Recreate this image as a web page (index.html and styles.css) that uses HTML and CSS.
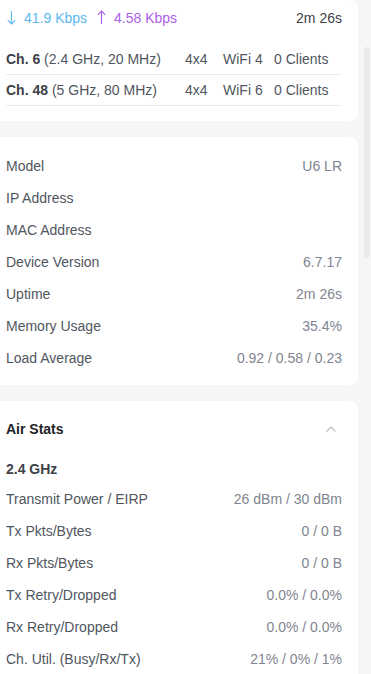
FILE: index.html
```html
<!DOCTYPE html>
<html>
<head>
<meta charset="utf-8">
<link rel="stylesheet" href="styles.css">
</head>
<body>
<div class="page">
  <main class="content">
    <section class="card card-top">
      <div class="speed-row">
        <div class="speeds">
          <span class="speed down">
            <svg class="arrow" width="9" height="15" viewBox="0 0 9 15"><path d="M4.5 1 V14 M0.8 10.2 L4.5 14 L8.2 10.2" fill="none" stroke="#5bb8f0" stroke-width="1.1"/></svg>
            41.9 Kbps
          </span>
          <span class="speed up">
            <svg class="arrow" width="9" height="15" viewBox="0 0 9 15"><path d="M4.5 14 V1 M0.8 4.8 L4.5 1 L8.2 4.8" fill="none" stroke="#ab5fe6" stroke-width="1.1"/></svg>
            4.58 Kbps
          </span>
        </div>
        <span class="uptime">2m 26s</span>
      </div>
      <div class="channels">
        <div class="chan-row">
          <span class="chan-name"><b>Ch. 6</b> (2.4 GHz, 20 MHz)</span>
          <span>4x4</span>
          <span>WiFi 4</span>
          <span>0 Clients</span>
        </div>
        <div class="chan-row">
          <span class="chan-name"><b>Ch. 48</b> (5 GHz, 80 MHz)</span>
          <span>4x4</span>
          <span>WiFi 6</span>
          <span>0 Clients</span>
        </div>
      </div>
    </section>

    <section class="card card-info">
      <div class="row"><span class="label">Model</span><span class="value">U6 LR</span></div>
      <div class="row"><span class="label">IP Address</span><span class="value"></span></div>
      <div class="row"><span class="label">MAC Address</span><span class="value"></span></div>
      <div class="row"><span class="label">Device Version</span><span class="value">6.7.17</span></div>
      <div class="row"><span class="label">Uptime</span><span class="value">2m 26s</span></div>
      <div class="row"><span class="label">Memory Usage</span><span class="value">35.4%</span></div>
      <div class="row"><span class="label">Load Average</span><span class="value">0.92 / 0.58 / 0.23</span></div>
    </section>

    <section class="card card-air">
      <div class="air-head">
        <h2>Air Stats</h2>
        <svg class="chevron" width="12" height="8" viewBox="0 0 12 8"><path d="M1.5 6.5 L6 2 L10.5 6.5" fill="none" stroke="#b4b8be" stroke-width="1.1"/></svg>
      </div>
      <div class="band">2.4 GHz</div>
      <div class="row"><span class="label">Transmit Power / EIRP</span><span class="value">26 dBm / 30 dBm</span></div>
      <div class="row"><span class="label">Tx Pkts/Bytes</span><span class="value">0 / 0 B</span></div>
      <div class="row"><span class="label">Rx Pkts/Bytes</span><span class="value">0 / 0 B</span></div>
      <div class="row"><span class="label">Tx Retry/Dropped</span><span class="value">0.0% / 0.0%</span></div>
      <div class="row"><span class="label">Rx Retry/Dropped</span><span class="value">0.0% / 0.0%</span></div>
      <div class="row"><span class="label">Ch. Util. (Busy/Rx/Tx)</span><span class="value">21% / 0% / 1%</span></div>
    </section>
  </main>
  <div class="scroll-track"><div class="scroll-thumb"></div></div>
</div>
</body>
</html>
```

FILE: styles.css
```css
html, body {
  margin: 0;
  padding: 0;
  height: 674px;
  overflow: hidden;
  background: #f5f6f7;
}

body {
  font-family: "Liberation Sans", Arial, sans-serif;
  font-size: 14px;
  color: #50565e;
}

.page {
  display: flex;
  height: 674px;
}

.content {
  width: 358px;
  display: flex;
  flex-direction: column;
  gap: 16px;
}

.card {
  background: #ffffff;
  border-radius: 0 8px 8px 0;
  padding: 0 16px 0 6px;
}

.card-top {
  padding-bottom: 15px;
}

.speed-row {
  height: 35px;
  display: flex;
  align-items: center;
  justify-content: space-between;
}

.speeds {
  display: flex;
  gap: 9px;
}

.speed {
  display: flex;
  align-items: center;
  gap: 8px;
}

.arrow {
  display: block;
  margin-left: 1px;
}

.down { color: #5bb8f0; }
.up { color: #ab5fe6; }
.uptime { color: #3d4148; }

.channels {
  margin-top: 9px;
}

.chan-row {
  height: 30px;
  display: grid;
  grid-template-columns: 179px 38px 51px auto;
  align-items: center;
  border-bottom: 1px solid #ebecee;
  color: #50565e;
}

.chan-row b {
  color: #3d4148;
  font-weight: bold;
}

.card-info {
  padding-top: 13px;
  padding-bottom: 11px;
}

.row {
  height: 32px;
  display: flex;
  align-items: center;
  justify-content: space-between;
}

.label { color: #50565e; }
.value { color: #7f8590; }

.card-air {
  padding-top: 18px;
  flex: 1;
  border-bottom-right-radius: 0;
}

.air-head {
  height: 20px;
  display: flex;
  align-items: center;
  justify-content: space-between;
  padding-right: 5px;
}

.air-head h2 {
  margin: 0;
  font-size: 14px;
  font-weight: bold;
  color: #212327;
}

.chevron {
  display: block;
}

.band {
  margin-top: 16px;
  height: 28px;
  display: flex;
  align-items: center;
  font-weight: bold;
  color: #3d4148;
}

.scroll-track {
  flex: 1;
  display: flex;
  justify-content: center;
}

.scroll-thumb {
  width: 6px;
  height: 211px;
  margin-top: 47px;
  margin-left: 4px;
  border-radius: 3px;
  background: #e9eaec;
}
```
